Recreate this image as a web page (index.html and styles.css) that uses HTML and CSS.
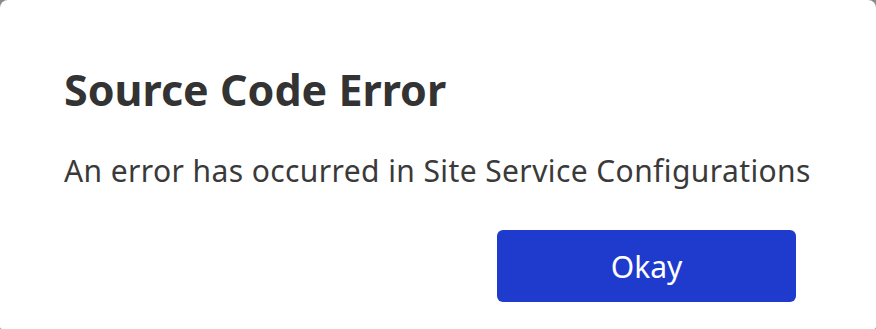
FILE: index.html
```html
<!DOCTYPE html>
<html lang="en">
<head>
<meta charset="utf-8">
<title>Source Code Error</title>
<link rel="stylesheet" href="styles.css">
</head>
<body>
<div class="dialog" role="dialog" aria-labelledby="dlg-title">
  <h1 class="dialog-title" id="dlg-title">Source Code Error</h1>
  <p class="dialog-message">An error has occurred in Site Service Configurations</p>
  <div class="dialog-actions">
    <button class="btn-primary" type="button">Okay</button>
  </div>
</div>
</body>
</html>
```
FILE: styles.css
```css
html, body {
  margin: 0;
  padding: 0;
  height: 100%;
}
body {
  background: #8a8a8a;
  font-family: "Noto Sans", "Open Sans", sans-serif;
  color: #333333;
}
.dialog {
  box-sizing: border-box;
  height: 100%;
  background: #ffffff;
  border-radius: 8px 8px 2px 2px;
  padding: 68px 80px 0 64px;
  display: flex;
  flex-direction: column;
}
.dialog-title {
  margin: 0;
  font-size: 43px;
  line-height: 43px;
  font-weight: 700;
  color: #333333;
}
.dialog-message {
  margin: 45px 0 0;
  font-size: 30px;
  line-height: 30px;
  font-weight: 400;
  letter-spacing: 0.4px;
  white-space: nowrap;
  color: #3a3a3a;
}
.dialog-actions {
  display: flex;
  justify-content: flex-end;
  margin-top: 44px;
}
.btn-primary {
  width: 299px;
  height: 72px;
  border: none;
  border-radius: 6px;
  background: #1f3bce;
  color: #ffffff;
  font-family: inherit;
  font-size: 30px;
  letter-spacing: 0;
  cursor: pointer;
}
```
